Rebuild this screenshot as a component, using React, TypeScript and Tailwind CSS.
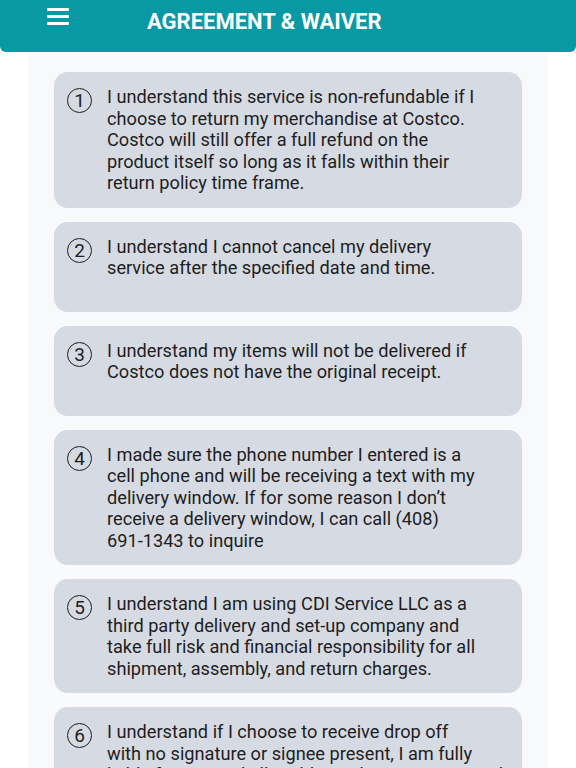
import React from "react";

const items: string[][] = [
  [
    "I understand this service is non-refundable if I",
    "choose to return my merchandise at Costco.",
    "Costco will still offer a full refund on the",
    "product itself so long as it falls within their",
    "return policy time frame.",
  ],
  [
    "I understand I cannot cancel my delivery",
    "service after the specified date and time.",
  ],
  [
    "I understand my items will not be delivered if",
    "Costco does not have the original receipt.",
  ],
  [
    "I made sure the phone number I entered is a",
    "cell phone and will be receiving a text with my",
    "delivery window. If for some reason I don\u2019t",
    "receive a delivery window, I can call (408)",
    "691-1343 to inquire",
  ],
  [
    "I understand I am using CDI Service LLC as a",
    "third party delivery and set-up company and",
    "take full risk and financial responsibility for all",
    "shipment, assembly, and return charges.",
  ],
  [
    "I understand if I choose to receive drop off",
    "with no signature or signee present, I am fully",
    "liable for any and all problems that may arise and",
    "release CDI Service LLC of any responsibility.",
  ],
];

export default function App() {
  return (
    <div
      className="w-[576px] h-[768px] overflow-hidden bg-white flex flex-col"
      style={{ fontFamily: "Roboto, 'Liberation Sans', sans-serif" }}
    >
      <header className="h-[52px] shrink-0 bg-[#0899a5] rounded-b-[6px] flex items-start pl-[47px] pt-[8px]">
        <svg width="22" height="18" viewBox="0 0 22 18">
          <rect x="0" y="0" width="22" height="3" rx="1" fill="#fff" />
          <rect x="0" y="7" width="22" height="3" rx="1" fill="#fff" />
          <rect x="0" y="14" width="22" height="3" rx="1" fill="#fff" />
        </svg>
        <h1 className="ml-[78px] mt-[0px] text-white text-[22px] leading-[28px] font-bold">
          AGREEMENT &amp; WAIVER
        </h1>
      </header>
      <div className="mx-[28px] flex-1 bg-[#f7f9fb] px-[26px] pt-[20px] flex flex-col gap-[14px]">
        {items.map((lines, i) => (
          <div
            key={i}
            className="shrink-0 min-h-[90px] bg-[#d6dae2] rounded-[14px] pl-[13px] pr-[8px] py-[14px] flex items-start"
          >
            <div className="mt-[2px] w-[25px] h-[25px] shrink-0 rounded-full border-[1.5px] border-[#1e1e1e] flex items-center justify-center text-[19px] leading-none text-[#1e1e1e]">
              {i + 1}
            </div>
            <div className="ml-[15px] text-[18.2px] leading-[21.5px] text-[#1e1e1e]">
              {lines.map((l, j) => (
                <div key={j} className="whitespace-nowrap">
                  {l}
                </div>
              ))}
            </div>
          </div>
        ))}
      </div>
    </div>
  );
}
